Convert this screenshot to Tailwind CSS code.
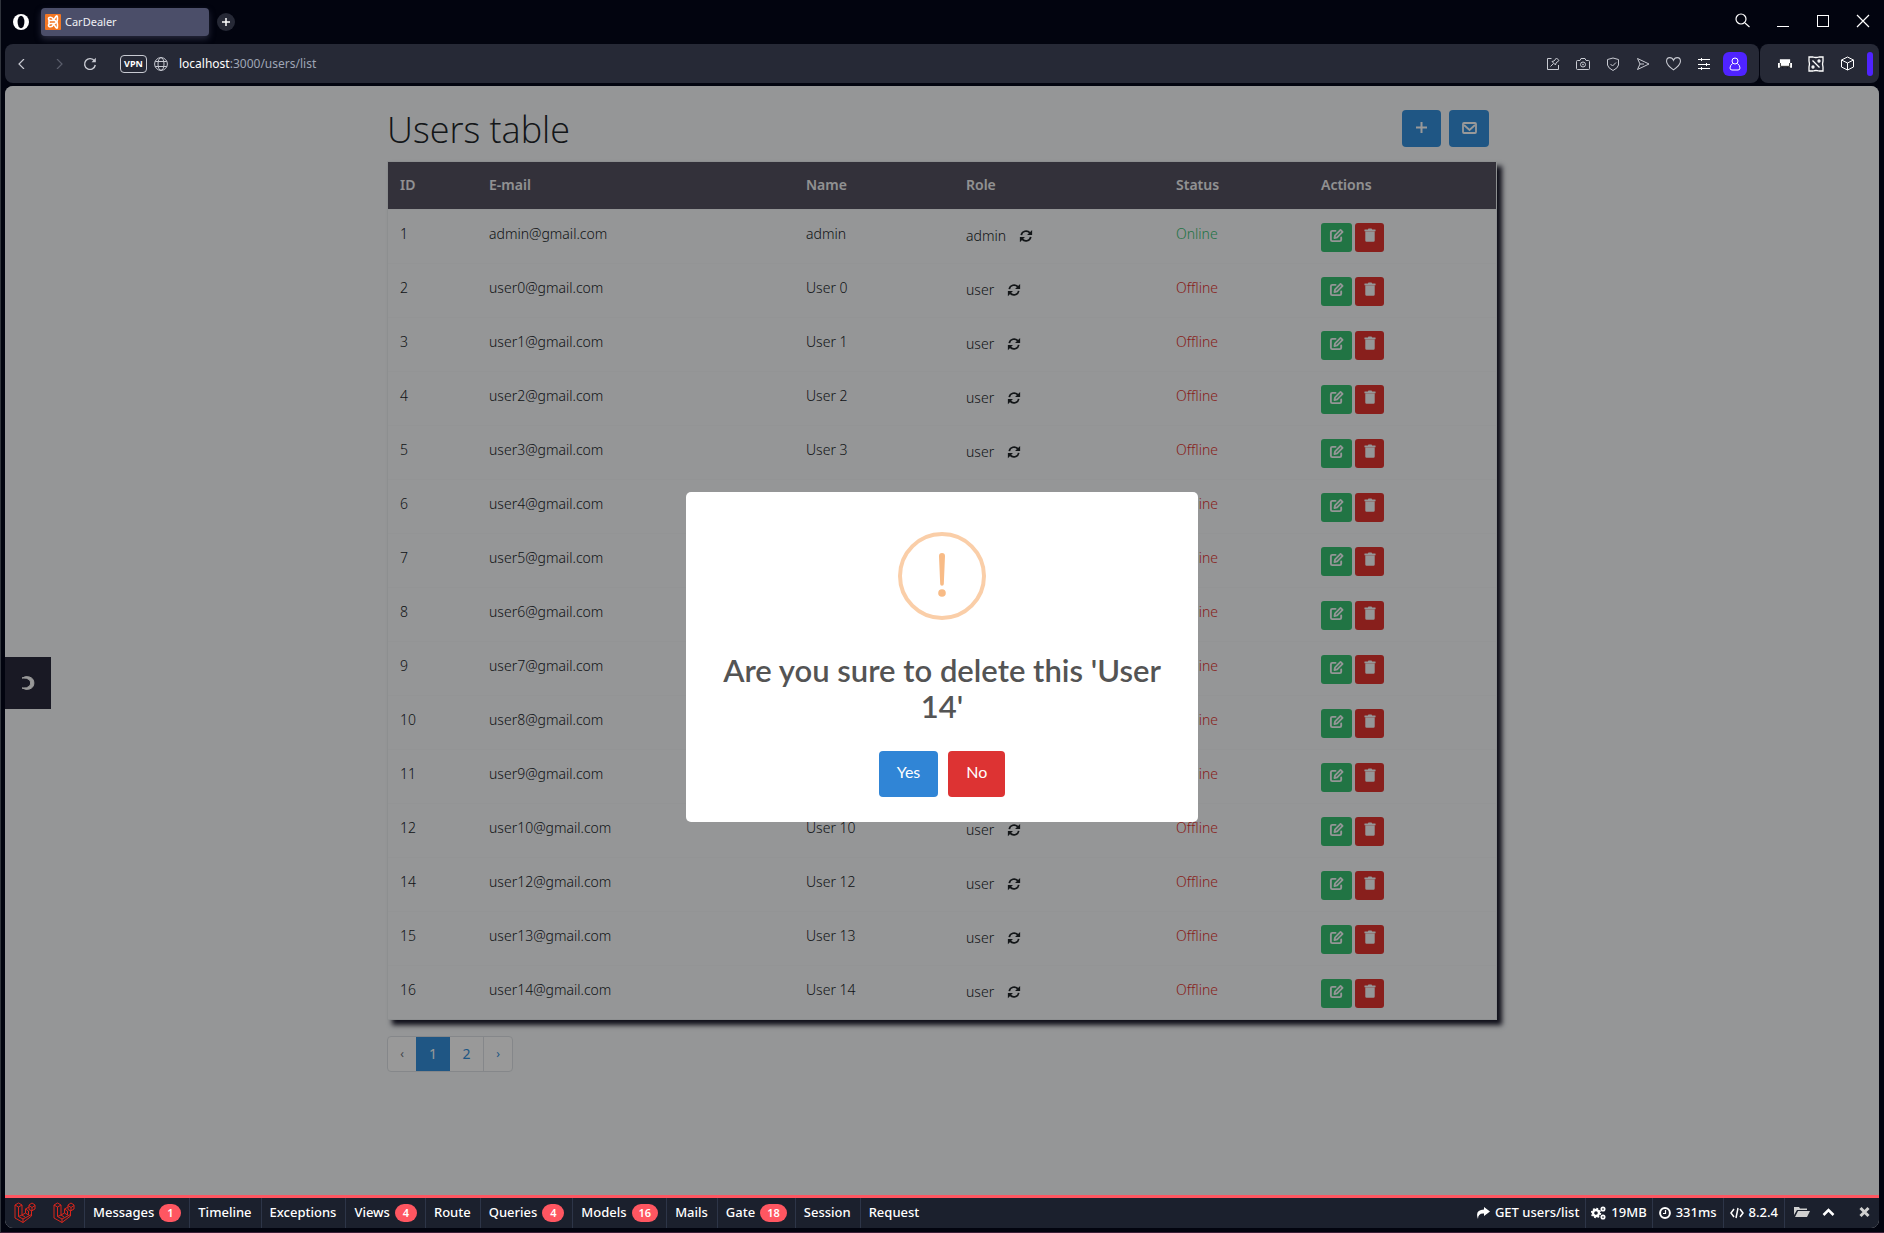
<!DOCTYPE html>
<html lang="en">
<head>
<meta charset="utf-8">
<title>CarDealer</title>
<script src="https://cdn.jsdelivr.net/npm/@tailwindcss/browser@4"></script>
</head>
<body class="flex min-h-screen flex-col border-b border-l border-b-[#3a2038] border-l-[#30343c] bg-[#02040f] pr-[5px] pb-1 pl-1 font-['Noto_Sans',sans-serif] text-[#f0f0f4]">
<svg class="hidden">
  <symbol id="refresh" viewBox="0 0 16 16"><path d="M2.6 7A5.6 5.6 0 0 1 12.4 4.4M13.4 9A5.6 5.6 0 0 1 3.6 11.6" fill="none" stroke="currentColor" stroke-width="2"/><path d="M15 1v5.8H9.2ZM1 15V9.2h5.8Z" fill="currentColor"/></symbol>
  <symbol id="edit" viewBox="0 0 16 16"><path d="M7 3H3.500Q2 3 2 4.500V12.500Q2 14 3.500 14H11.500Q13 14 13 12.500V10" fill="none" stroke="currentColor" stroke-width="2" stroke-linecap="round"/><path d="M5.800 10.700 6.500 7.800 12.300 2 14.500 4.200 8.700 10Z" fill="none" stroke="currentColor" stroke-width="1.900" stroke-linejoin="round"/></symbol>
  <symbol id="trash" viewBox="0 0 14 16"><path d="M1 1.500h3.500L5.200.5h3.600l.7 1H13a.5.5 0 0 1 .5.500V3.500H.5V2A.5.5 0 0 1 1 1.500ZM1.500 4h11V14.500A1.500 1.500 0 0 1 11 16H3a1.500 1.500 0 0 1-1.500-1.500Z" fill="currentColor"/></symbol>
  <symbol id="laravel" viewBox="0 0 22 22"><path d="M1 3 4.500 1 8 3V13L11.500 11V7L15 5V3L18 1 21 3V7L17.500 9V14L9 20.500 1 16ZM1 3 4.500 5 8 3M4.500 5V14.500L9 17 17.500 12.500M9 17V20.500M4.500 14.500 8 13M15 3.500 18 5.500 21 3.500M18 5.500V9M15 5V7.500L18 9M11.500 7 14.500 9V13M11.500 11 14.500 13M8 13 11 15" fill="none" stroke="currentColor" stroke-width="1"/></symbol>
</svg>

<header class="flex h-[44px] items-start pt-[8px]">
  <svg class="mt-[6px] ml-2 size-4" viewBox="0 0 16 16"><circle cx="8" cy="8" r="8" fill="#fff"/><ellipse cx="8" cy="8" rx="3.400" ry="6.200" fill="#02040f"/></svg>
  <div class="ml-3 flex h-7 w-[168px] items-center gap-1 rounded bg-[#4b4e69] pl-1 text-[11px] shadow-[0_3px_6px_rgba(75,78,105,0.5)]">
    <svg class="size-4" viewBox="0 0 16 16"><rect width="16" height="16" rx="1" fill="#f37623"/><path d="M8 6.500H6Q3.500 6.500 3.500 4.800T5.500 3.200 8 5 10.500 3.200 12.500 4.800 10 6.500ZM8 9.500H6Q3.500 9.500 3.500 11.200T5.500 12.800 8 11 10.500 12.800 12.500 11.200 10 9.500ZM4 6.500v3M12 6.500v3" fill="none" stroke="#fff" stroke-width="1.600"/></svg>
    CarDealer
  </div>
  <button aria-label="New tab" class="mt-[5px] ml-2 grid size-[18px] place-items-center rounded-full bg-[#262936]"><svg class="size-2" viewBox="0 0 8 8"><path d="M4 0v8M0 4h8" stroke="#fff" stroke-width="1.500"/></svg></button>
  <div class="mr-[9px] ml-auto flex items-center gap-[26px] pt-[5px]">
    <button aria-label="Search"><svg class="size-[15px]" viewBox="0 0 15 15" fill="none" stroke="#fff" stroke-width="1.200"><circle cx="6" cy="6" r="5"/><path d="m10 10 4.500 4"/></svg></button>
    <button aria-label="Minimize"><svg class="size-[14px]" viewBox="0 0 14 14"><path d="M1 12.500h12" stroke="#fff"/></svg></button>
    <button aria-label="Maximize"><svg class="size-[14px]" viewBox="0 0 14 14"><rect x="1.500" y="1.500" width="11" height="11" stroke="#fff" fill="none"/></svg></button>
    <button aria-label="Close"><svg class="size-[14px]" viewBox="0 0 14 14"><path d="m1 1 12 12M13 1 1 13" stroke="#fff" stroke-width="1.200"/></svg></button>
  </div>
</header>

<nav class="flex h-[39px] gap-[1px] text-[#c8cad2]">
  <div class="flex flex-1 items-center rounded-lg bg-[#262936]">
    <button aria-label="Back" class="ml-3"><svg class="size-[10px]" viewBox="0 0 10 10"><path d="M7 0 2 5l5 5" fill="none" stroke="currentColor" stroke-width="1.200"/></svg></button>
    <button aria-label="Forward" class="ml-[27px] text-[#5a5d6b]"><svg class="size-[10px]" viewBox="0 0 10 10"><path d="m3 0 5 5-5 5" fill="none" stroke="currentColor" stroke-width="1.200"/></svg></button>
    <button aria-label="Reload" class="ml-[19px]"><svg class="size-[14px]" viewBox="0 0 14 14"><path d="M11.500 4A5.400 5.400 0 1 0 12.300 8" fill="none" stroke="currentColor" stroke-width="1.400"/><path d="M12.800.8v4.400H8.500Z" fill="currentColor"/></svg></button>
    <span class="ml-[23px] grid h-[18px] w-[27px] place-items-center rounded-[4px] border border-[#c8cad2] text-[9px] font-bold text-white">VPN</span>
    <svg class="ml-[7px] size-[14px]" viewBox="0 0 14 14" fill="none" stroke="currentColor"><circle cx="7" cy="7" r="6.400"/><ellipse cx="7" cy="7" rx="3" ry="6.400"/><path d="M1.200 4.500h11.600M1.200 9.500h11.600"/></svg>
    <span class="ml-[11px] text-xs text-[#9fa5b5]"><span class="text-white">localhost</span>:3000/users/list</span>
    <div class="mr-3 ml-auto flex items-center gap-4">
      <svg class="size-[14px]" viewBox="0 0 14 14" fill="none" stroke="currentColor"><path d="M5.500 1.500H1.500v11h11V8M4.500 9.500l3-3M6 4.500 9.500 8l.5-2 3-2.500L10.500 1 8 4Z"/></svg>
      <svg class="size-[14px]" viewBox="0 0 14 14" fill="none" stroke="currentColor"><path d="M1.500 3.500H4l1-2h4l1 2h2.500q1 0 1 1v7q0 1-1 1h-11q-1 0-1-1v-7q0-1 1-1Z"/><circle cx="7" cy="7.500" r="2.500"/><circle cx="7" cy="7.500" r=".5"/></svg>
      <svg class="size-[14px]" viewBox="0 0 14 14" fill="none" stroke="currentColor"><path d="M1.500 2.500 7 1l5.500 1.500V8Q12 11 7 13.500 2 11 1.500 8ZM4.500 7l2 2 3.500-3.500"/></svg>
      <svg class="size-[14px]" viewBox="0 0 14 14" fill="none" stroke="currentColor"><path d="M1.500 1.500 13 7 1.500 12.500 4 7ZM4 7h4"/></svg>
      <svg class="size-[15px]" viewBox="0 0 14 14" fill="none" stroke="currentColor"><path d="M7 13Q.5 8.500.5 5 .5 1.500 3.500 1.500 6 1.500 7 4 8 1.500 10.500 1.500q3 0 3 3.500 0 3.500-6.500 8Z"/></svg>
      <svg class="size-[14px]" viewBox="0 0 14 14" fill="none" stroke="#fff"><path d="M1 2.500h12M1 7.500h12M1 11.500h12M4.500 1v3M9.500 6v3M4.500 10v3"/></svg>
      <button aria-label="Profile" class="-ml-1 grid size-6 place-items-center rounded-md bg-[#4f23ff]"><svg class="size-[14px]" viewBox="0 0 14 14" fill="none" stroke="#fff"><circle cx="7" cy="4" r="3"/><path d="M4.500 6.500Q2 8.500 2 11q0 2 2 2h6q2 0 2-2 0-2.500-2.500-4.500"/></svg></button>
    </div>
  </div>
  <div class="flex items-center gap-4 rounded-lg bg-[#262936] pr-[6px] pl-[18px]">
    <svg class="h-[12px] w-[14px]" viewBox="0 0 15 12"><path d="M2 1h11v4h2v5h-2V9H2v1H0V5h2Z" fill="#fff"/><path d="M2.500 5v3.500h10V5M4.500 10h1m4 0h1" stroke="#111" fill="none"/></svg>
    <svg class="size-4" viewBox="0 0 16 16" fill="none" stroke="#fff" stroke-width="1.300"><path d="M1 1h4q3 1 6 0h4v4q-1 3 0 6v4h-4q-3-1-6 0H1v-4q1-3 0-6ZM4.500 4.500l7 7"/><circle cx="11" cy="5" r="1"/><circle cx="5" cy="11" r="1"/></svg>
    <svg class="size-[15px]" viewBox="0 0 15 15" fill="none" stroke="#fff"><path d="M7.500 1 13.500 4v7l-6 3-6-3V4ZM1.500 4l6 3 6-3M7.500 7v7"/></svg>
    <span class="ml-[-4px] h-6 w-[6px] rounded bg-[#4f23ff]"></span>
  </div>
</nav>

<div class="relative mt-[3px] flex flex-1 flex-col overflow-hidden rounded-lg bg-[#f8fafc] text-[#212529]">
  <main class="mx-auto w-full max-w-[1110px] flex-1">
    <div class="flex items-start justify-between pt-6 pr-2">
      <h1 class="h-[51px] font-['Open_Sans',sans-serif] text-4xl leading-[40px] font-light">Users table</h1>
      <div class="flex gap-2">
        <button aria-label="Add user" class="grid h-[37px] w-[39px] place-items-center rounded bg-[#3490dc] text-white"><svg class="-mt-[2px] size-[13px]" viewBox="0 0 13 13"><path d="M6.500 1v11M1 6.500h11" stroke="currentColor" stroke-width="2"/></svg></button>
        <button aria-label="Send mail" class="grid h-[37px] w-10 place-items-center rounded bg-[#3490dc] text-white"><svg class="-mt-[2px] h-3 w-[15px]" viewBox="0 0 15 12"><rect x="1" y="1" width="13" height="10" rx="1" fill="none" stroke="currentColor" stroke-width="1.800"/><path d="m2 3 5.500 5L13 3" fill="none" stroke="currentColor" stroke-width="1.800"/></svg></button>
      </div>
    </div>
    <div class="border border-[#eceef0] shadow-[5px_5px_5px_#1a1a2b]">
      <table class="w-full table-fixed border-collapse text-left text-sm">
        <colgroup><col class="w-[89px]"><col class="w-[317px]"><col class="w-[160px]"><col class="w-[210px]"><col class="w-[145px]"><col></colgroup>
        <thead>
          <tr class="h-[47px] bg-[#555362] text-[#f2f2f4]">
            <th class="px-3 font-semibold">ID</th><th class="px-3 font-semibold">E-mail</th><th class="px-3 font-semibold">Name</th><th class="px-3 font-semibold">Role</th><th class="px-3 font-semibold">Status</th><th class="px-3 font-semibold">Actions</th>
          </tr>
        </thead>
        <tbody id="users" class="bg-[#f8fafc] font-light"></tbody>
      </table>
    </div>
    <ul class="mt-4 inline-flex h-9 overflow-hidden rounded border border-[#dee2e6] bg-white text-sm text-[#3490dc]">
      <li class="grid w-[28px] place-items-center text-xs text-[#6c757d]">‹</li>
      <li class="grid w-[34px] place-items-center bg-[#3490dc] text-white">1</li>
      <li><a href="#" class="grid h-full w-[33px] place-items-center">2</a></li>
      <li><a href="#" class="grid h-full w-[29px] place-items-center border-l border-[#dee2e6] text-xs">›</a></li>
    </ul>
  </main>

  <button aria-label="Open menu" class="absolute top-1/2 left-0 grid h-[52px] w-[46px] place-items-center bg-[#2a2a3c] text-white"><svg class="size-4" viewBox="0 0 16 16"><path d="M2 3Q6 .8 9.500 2a6.300 6.300 0 0 1 0 12Q6 15.200 2 13 7 13.500 9 11.500a4.500 4.500 0 0 0 0-7Q7 2.500 2 3Z" fill="currentColor" stroke="currentColor"/></svg></button>

  <div class="absolute inset-0 flex items-center justify-center bg-black/40">
    <div role="dialog" aria-labelledby="ask" class="flex w-[512px] flex-col items-center rounded-[5px] bg-white px-8 pt-10 pb-[25px] text-center font-['Lato',sans-serif]">
      <svg class="size-[88px]" viewBox="0 0 88 88"><circle cx="44" cy="44" r="42" fill="none" stroke="#facea8" stroke-width="4"/><path d="M41 24a3 3 0 0 1 6 0L45.800 52a1.800 1.800 0 0 1-3.600 0Z" fill="#f8bb86"/><circle cx="44" cy="61" r="3.800" fill="#f8bb86"/></svg>
      <h2 id="ask" class="mt-8 text-[31px] leading-9 font-semibold text-[#545454]">Are you sure to delete this 'User 14'</h2>
      <div class="mt-[27px] flex gap-[10px] text-base text-white">
        <button class="h-[46px] rounded bg-[#3085d6] px-[18px] pb-1">Yes</button>
        <button class="h-[46px] rounded bg-[#dd3333] px-[18px] pb-1">No</button>
      </div>
    </div>
  </div>

  <footer class="relative flex h-[33px] shrink-0 border-t-[3px] border-[#ff5661] bg-[#1b202d] text-[13px] font-medium text-white">
    <div class="flex items-center gap-[17px] px-[9px] text-[#d8261c]"><svg class="size-[22px]"><use href="#laravel"/></svg><svg class="size-[22px]"><use href="#laravel"/></svg></div>
    <div id="tabs" class="flex"></div>
    <div class="ml-auto flex">
      <span class="flex items-center gap-[5px] px-[6px]"><svg class="h-3 w-[14px]" viewBox="0 0 14 12"><path d="M8 0l6 4.500-6 4.500V6.500Q2 6 2 12-1.500 3 8 2.500Z" fill="currentColor"/></svg>GET users/list</span>
      <span class="flex items-center gap-[5px] border-l border-[#2d3548] px-[5px]"><svg class="h-[14px] w-[15px]" viewBox="0 0 15 14" fill="none" stroke="currentColor"><circle cx="5" cy="7" r="3" stroke-width="2.400"/><circle cx="5" cy="7" r="4.500" stroke-width="1.500" stroke-dasharray="1.800 1.700"/><circle cx="12" cy="3" r="1.700" stroke-width="1.700"/><circle cx="12" cy="11" r="1.700" stroke-width="1.700"/></svg>19MB</span>
      <span class="flex items-center gap-[5px] border-l border-[#2d3548] px-[6px]"><svg class="size-3" viewBox="0 0 12 12" fill="none" stroke="currentColor"><circle cx="6" cy="6" r="4.900" stroke-width="2"/><path d="M6.500 3v3.500H4" stroke-width="1.200"/></svg>331ms</span>
      <span class="flex items-center gap-[5px] border-l border-[#2d3548] px-[6px]"><svg class="h-3 w-[14px]" viewBox="0 0 14 12"><path d="M4 2 1 6l3 4M10 2l3 4-3 4M8 1 6 11" fill="none" stroke="currentColor" stroke-width="1.500"/></svg>8.2.4</span>
      <span class="flex items-start gap-3 border-l border-[#2d3548] px-[9px] pt-2">
        <button aria-label="Open"><svg class="h-3 w-4" viewBox="0 0 16 12"><path d="M0 9V1h5l1 1.500h7V4H3ZM4 5h12l-3 6H1Z" fill="#d0d0d0"/></svg></button>
        <button aria-label="Expand"><svg class="h-3 w-[13px]" viewBox="0 0 13 12"><path d="m1.500 9 5-5 5 5" fill="none" stroke="#fff" stroke-width="2.500"/></svg></button>
        <button aria-label="Close bar" class="ml-3"><svg class="h-3 w-[11px]" viewBox="0 0 11 12"><path d="m1.500 2 8 8M9.500 2l-8 8" stroke="#d0d0d0" stroke-width="3"/></svg></button>
      </span>
    </div>
  </footer>
</div>

<script>
const rows = [[1, 'admin', 'admin', 'admin']];
for (const n of [0, 1, 2, 3, 4, 5, 6, 7, 8, 9, 10, 12, 13, 14]) rows.push([n + 2, 'user' + n, 'User ' + n, 'user']);
document.getElementById('users').innerHTML = rows.map(([id, mail, name, role]) => `
  <tr class="h-[54px] border-t border-[#f5f7f9] align-top">
    <td class="px-3 pt-[14px] leading-5">${id}</td>
    <td class="px-3 pt-[14px] leading-5">${mail}@gmail.com</td>
    <td class="px-3 pt-[14px] leading-5">${name}</td>
    <td class="px-3 pt-4 leading-5"><span class="flex items-center gap-[13px]">${role}<button aria-label="Change role"><svg class="size-[14px]"><use href="#refresh"/></svg></button></span></td>
    <td class="px-3 pt-[14px] leading-5 ${id === 1 ? 'text-[#38c172]' : 'text-[#e3342f]'}">${id === 1 ? 'Online' : 'Offline'}</td>
    <td class="px-3 pt-[13px]"><span class="flex gap-[3px] text-[#f8fafc]">
      <button aria-label="Edit" class="grid h-[29px] w-[31px] place-items-center rounded-[3px] bg-[#38c172] pb-1"><svg class="size-[15px]"><use href="#edit"/></svg></button>
      <button aria-label="Delete" class="grid h-[29px] w-[29px] place-items-center rounded-[3px] bg-[#e3342f] pb-1"><svg class="h-[14px] w-3"><use href="#trash"/></svg></button>
    </span></td>
  </tr>`).join('');
document.getElementById('tabs').innerHTML = [['Messages', 1], ['Timeline'], ['Exceptions'], ['Views', 4], ['Route'], ['Queries', 4], ['Models', 16], ['Mails'], ['Gate', 18], ['Session'], ['Request']].map(([t, n]) =>
  n ? `<a href="#" class="flex items-center gap-[5px] border-l border-[#2d3548] px-2">${t}<span class="grid h-[18px] min-w-[22px] place-items-center rounded-full bg-[#ff5661] px-[7px] text-[11px] font-semibold">${n}</span></a>`
    : `<a href="#" class="flex items-center border-l border-[#2d3548] pr-[9px] pl-2">${t}</a>`).join('');
</script>
</body>
</html>
